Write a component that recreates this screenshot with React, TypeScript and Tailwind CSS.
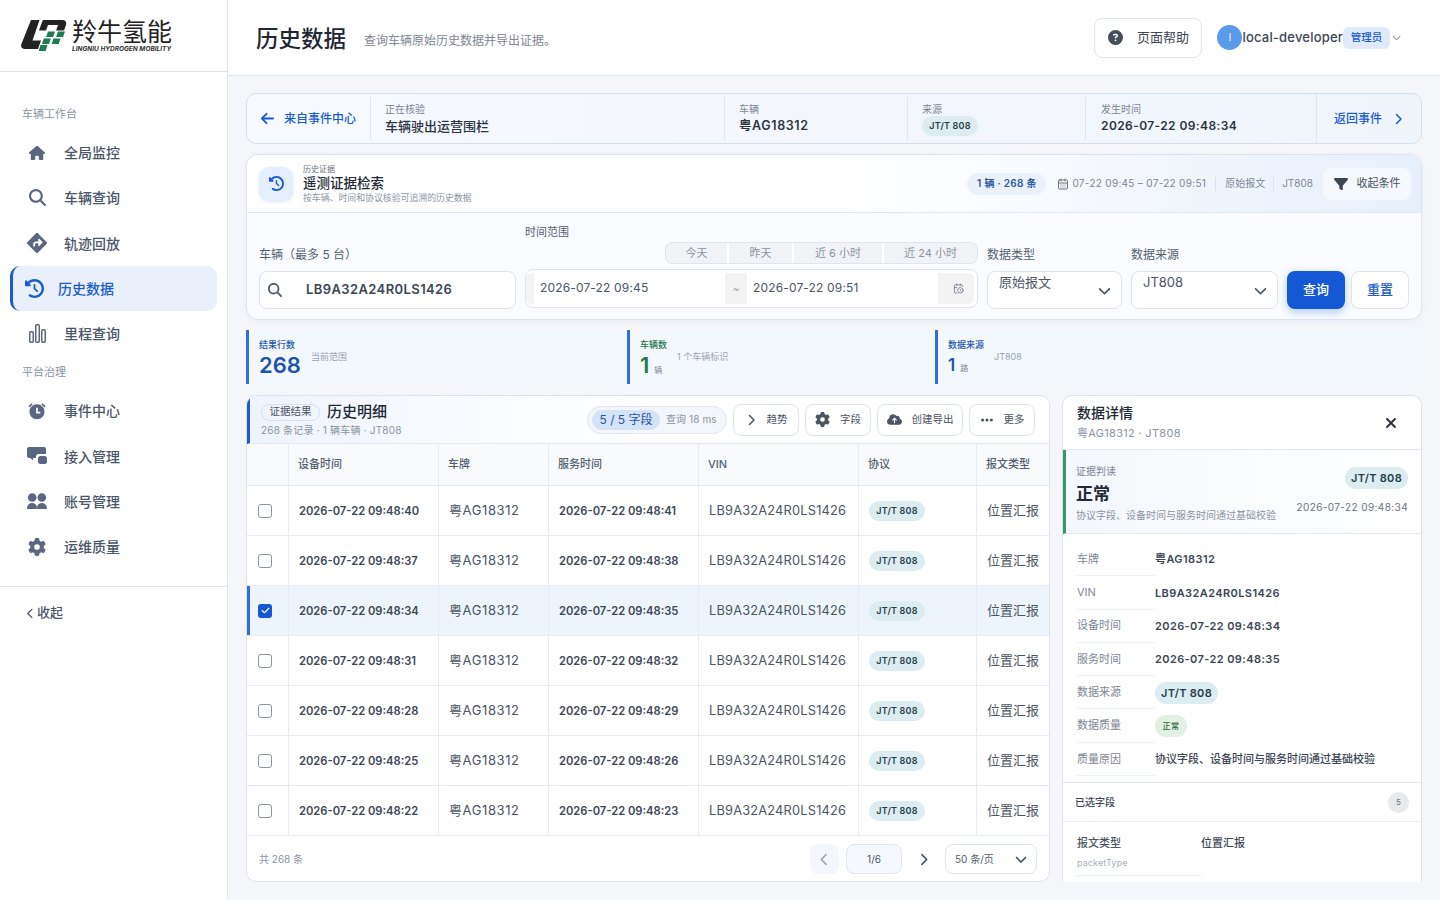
import { FaHouse, FaMagnifyingGlass, FaDiamondTurnRight, FaClockRotateLeft, FaGear, FaCircleQuestion, FaFilter, FaEllipsis, FaXmark, FaCheck, FaCloudArrowUp, FaArrowLeft, FaChevronRight, FaChevronLeft, FaChevronDown } from 'react-icons/fa6';
import { RiAlarmFill } from 'react-icons/ri';
import { LuCalendarDays, LuCalendarClock } from 'react-icons/lu';

const FONT = "font-['Inter','Noto_Sans_CJK_SC',sans-serif]";

function AccessIcon() {
	return (
		<svg width="20" height="19" viewBox="0 0 20 19" fill="currentColor">
			<path d="M2 0h15a2 2 0 0 1 2 2v5h-7a3 3 0 0 0-3 3v1H6v2.5L3.2 11H2a2 2 0 0 1-2-2V2a2 2 0 0 1 2-2z" />
			<rect x="11" y="9" width="9" height="8" rx="2.5" />
		</svg>
	);
}

function BarsIcon() {
	return (
		<svg width="17" height="19" viewBox="0 0 17 19" fill="none" stroke="currentColor" strokeWidth="1.5">
			<rect x="0.75" y="7.750" width="3.5" height="10.500" rx="1" />
			<rect x="6.750" y="0.750" width="3.5" height="17.500" rx="1" />
			<rect x="12.750" y="5.750" width="3.5" height="12.500" rx="1" />
		</svg>
	);
}

function PeopleIcon() {
	return (
		<svg width="20" height="16" viewBox="0 0 20 16" fill="currentColor">
			<circle cx="5.200" cy="4.500" r="4.300" />
			<circle cx="14.800" cy="4.500" r="4.300" />
			<path d="M0 16c0-3.500 2-6 5.200-6 2 0 3.500.9 4.300 2.500.3.800.4 2.200.4 3.500zM20 16c0-3.500-2-6-5.200-6-2 0-3.500.9-4.300 2.500-.3.800-.4 2.200-.4 3.500z" />
		</svg>
	);
}

function LogoMark() {
	return (
		<svg width="46" height="31" viewBox="0 0 46 31">
			<path d="M10 0h8.500L11.500 20.500H20L17 29H4C.8 29-.6 27 .4 24z" fill="#222" />
			<path d="M22 0h18.500c4 0 5.500 2 4.500 5l-2 5.500h-8l2.200-5.500H27l-2 5.500h-7l2.500-7C21 2 21.500 1 22 0z" fill="#222" />
			<path d="M27 11.500h7l-1.800 5.500h-7zM37 11.500h7L42 17h-7zM22.800 18.500h7L28 24h-7zM32.500 18.500h7L37.700 24h-7zM19.500 25h7l-1.800 6h-7z" fill="#1f7a4d" />
		</svg>
	);
}

const mainNav = [
	{ label: '全局监控', icon: <FaHouse size={16} /> },
	{ label: '车辆查询', icon: <FaMagnifyingGlass size={17} /> },
	{ label: '轨迹回放', icon: <FaDiamondTurnRight size={20} /> },
	{ label: '历史数据', icon: <FaClockRotateLeft size={19} />, active: true },
	{ label: '里程查询', icon: <BarsIcon /> },
];
const adminNav = [
	{ label: '事件中心', icon: <RiAlarmFill size={24} /> },
	{ label: '接入管理', icon: <AccessIcon /> },
	{ label: '账号管理', icon: <PeopleIcon /> },
	{ label: '运维质量', icon: <FaGear size={18} /> },
];

function NavItem({ label, icon, active }: { label: string; icon: React.ReactNode; active?: boolean }) {
	if (active) {
		return (
			<div className="mx-[10px] flex h-[45.250px] items-center rounded-[10px] border-l-[3px] border-[#1a5bd0] bg-[#e9f0fb] pl-[11px] text-[#1a5bd0]">
				<span className="flex w-[20px] justify-center">{icon}</span>
				<span className="ml-[14px] text-[14px] font-medium">{label}</span>
			</div>
		);
	}
	return (
		<div className="flex h-[45.250px] items-center pl-[27px] text-[#4b5668]">
			<span className="flex w-[20px] justify-center text-[#5b6780]">{icon}</span>
			<span className="ml-[17px] text-[14px] font-medium">{label}</span>
		</div>
	);
}

function Sidebar() {
	return (
		<aside className="flex w-[228px] shrink-0 flex-col border-r border-[#e2e6ec] bg-white">
			<div className="flex h-[72px] items-center gap-[5px] border-b border-[#e2e6ec] pl-[21px]">
				<LogoMark />
				<div className="flex flex-col">
					<span className="text-[25px] leading-[26px] font-normal whitespace-nowrap text-[#222]">羚牛氢能</span>
					<span className="text-[6.500px] leading-[8px] font-bold whitespace-nowrap text-[#333] italic">LINGNIU HYDROGEN MOBILITY</span>
				</div>
			</div>
			<div className="pt-[34px] pl-[22px] text-[11px] leading-[16px] text-[#8b94a3]">车辆工作台</div>
			<div className="mt-[8px] flex flex-col">
				{mainNav.map((n) => (
					<NavItem key={n.label} {...n} />
				))}
			</div>
			<div className="mt-[8px] pl-[22px] text-[11px] leading-[16px] text-[#8b94a3]">平台治理</div>
			<div className="mt-[8px] flex flex-col border-b border-[#e2e6ec] pb-[17px]">
				{adminNav.map((n) => (
					<NavItem key={n.label} {...n} />
				))}
			</div>
			<div className="mt-[16px] flex items-center gap-[1px] pl-[25px] text-[13px] font-medium text-[#4b5668]">
				<FaChevronLeft size={11} />
				收起
			</div>
		</aside>
	);
}

function TopBar() {
	return (
		<header className="flex h-[76px] shrink-0 items-center justify-between border-b border-[#e2e6ec] bg-white pr-[39px] pl-[28px]">
			<div className="mt-[2px] flex items-center gap-[18px]">
				<h1 className="text-[22.500px] font-medium text-[#1f2733]">历史数据</h1>
				<span className="mt-[5px] text-[12px] text-[#7d8694]">查询车辆原始历史数据并导出证据。</span>
			</div>
			<div className="flex items-center">
				<button type="button" className="flex h-[40px] w-[108px] items-center justify-center gap-[14px] rounded-[8px] border border-[#e2e6ec] bg-white text-[13px] text-[#3c4654]">
					<FaCircleQuestion size={15} className="text-[#454d59]" />
					页面帮助
				</button>
				<div className="ml-[15px] flex h-[25px] w-[25px] items-center justify-center rounded-full bg-[#5a9bea] text-[10px] text-white">l</div>
				<span className="text-[13px] font-medium tracking-[0.2px] text-[#3c4654]">local-developer</span>
				<span className="flex h-[22px] w-[47px] items-center justify-center rounded-[6px] bg-[#dfeafb] text-[10.500px] font-medium text-[#1a5bd0]">管理员</span>
				<FaChevronDown size={9} className="ml-[2px] text-[#9aa3af]" />
			</div>
		</header>
	);
}

function ProtoTag({ big }: { big?: boolean }) {
	return (
		<span className={`inline-flex items-center justify-center rounded-full bg-[#dcecf0] font-semibold whitespace-nowrap text-[#1f3f4a] ${big ? 'h-[22px] w-[63px] text-[11px] tracking-[0.3px]' : 'h-[20px] w-[56px] text-[9px] tracking-[0.2px]'}`}>
			JT/T 808
		</span>
	);
}

function ContextBar() {
	return (
		<section className="flex h-[51px] shrink-0 rounded-[10px] border border-[#d6dfec] bg-gradient-to-r from-[#f6f9fd] to-[#f0f5fc]">
			<div className="flex w-[123px] shrink-0 items-center gap-[9px] pl-[13px] text-[#1a5bd0]">
				<FaArrowLeft size={15} />
				<span className="text-[12px] font-medium whitespace-nowrap">来自事件中心</span>
			</div>
			<div className="my-[3px] flex w-[354px] shrink-0 flex-col justify-center border-l border-[#e0e6ef] pl-[14px]">
				<span className="text-[10px] leading-[15px] text-[#7d8694]">正在核验</span>
				<span className="text-[13px] leading-[19px] font-medium text-[#2b3440]">车辆驶出运营围栏</span>
			</div>
			<div className="my-[3px] flex w-[183px] shrink-0 flex-col justify-center border-l border-[#e0e6ef] pl-[14px]">
				<span className="text-[10px] leading-[15px] text-[#7d8694]">车辆</span>
				<span className="text-[12.500px] leading-[18px] font-semibold tracking-[0.6px] text-[#2b3440]">粤AG18312</span>
			</div>
			<div className="my-[3px] flex w-[178px] shrink-0 flex-col justify-center border-l border-[#e0e6ef] pl-[14px]">
				<span className="text-[10px] leading-[14px] text-[#7d8694]">来源</span>
				<span className="flex"><ProtoTag /></span>
			</div>
			<div className="my-[3px] flex w-[231px] shrink-0 flex-col justify-center border-l border-[#e0e6ef] pl-[15px]">
				<span className="text-[10px] leading-[15px] text-[#7d8694]">发生时间</span>
				<span className="text-[12px] leading-[18px] font-semibold tracking-[0.4px] text-[#2b3440]">2026-07-22 09:48:34</span>
			</div>
			<div className="flex flex-1 items-center gap-[10px] border-l border-[#e0e6ef] pl-[17px] text-[#1a5bd0]">
				<span className="text-[12px] font-medium whitespace-nowrap">返回事件</span>
				<FaChevronRight size={12} />
			</div>
		</section>
	);
}

function FieldLabel({ children }: { children: React.ReactNode }) {
	return <div className="text-[12px] leading-[18px] text-[#55606e]">{children}</div>;
}

function SelectBox({ value, w }: { value: string; w: string }) {
	return (
		<div className={`flex h-[38px] items-start justify-between rounded-[8px] border border-[#dfe4eb] bg-white pr-[10px] pl-[11px] ${w}`}>
			<span className="text-[13px] leading-[20px] text-[#4b5563]">{value}</span>
			<FaChevronDown size={13} className="mt-[12px] text-[#4b5563]" />
		</div>
	);
}

function SearchCard() {
	return (
		<section className="mt-[10px] h-[166px] shrink-0 rounded-[12px] border border-[#dde3ec] bg-[#f9fbfe] shadow-[0_2px_6px_rgba(30,60,110,0.04)]">
			<div className="flex h-[58px] items-center justify-between rounded-t-[12px] border-b border-[#e3e8f0] bg-gradient-to-r from-white via-white to-[#e7effb] pr-[10px] pl-[12px]">
				<div className="flex items-center gap-[10px]">
					<div className="flex h-[34px] w-[34px] items-center justify-center rounded-[10px] bg-[#e5effc] text-[#1a5bd0] shadow-[0_1px_3px_rgba(30,60,110,0.15)]">
						<FaClockRotateLeft size={15} />
					</div>
					<div className="flex flex-col">
						<span className="text-[8px] leading-[11px] text-[#6b7480]">历史证据</span>
						<span className="text-[13.500px] leading-[17px] font-medium text-[#222a35]">遥测证据检索</span>
						<span className="text-[8.900px] leading-[12px] text-[#8b94a3]">按车辆、时间和协议核验可追溯的历史数据</span>
					</div>
				</div>
				<div className="flex items-center">
					<span className="flex h-[22px] w-[79px] items-center justify-center rounded-full bg-[#eaf1fb] text-[10px] font-semibold tracking-[0.3px] whitespace-nowrap text-[#2d5a9e]">1 辆 · 268 条</span>
					<LuCalendarDays size={12} className="ml-[11px] text-[#6b7480]" />
					<span className="ml-[3px] text-[10px] tracking-[0.3px] whitespace-nowrap text-[#7d8694]">07-22 09:45 – 07-22 09:51</span>
					<span className="mx-[9px] h-[14px] border-l border-[#dbe1ea]" />
					<span className="text-[10px] whitespace-nowrap text-[#7d8694]">原始报文</span>
					<span className="mx-[8px] h-[14px] border-l border-[#dbe1ea]" />
					<span className="text-[10px] whitespace-nowrap text-[#7d8694]">JT808</span>
					<div className="ml-[10px] flex h-[32px] w-[88px] items-center justify-center gap-[9px] rounded-[8px] bg-[#f5f8fd] text-[11px] whitespace-nowrap text-[#4b5563]">
						<FaFilter size={14} className="shrink-0 text-[#3c4654]" />
						收起条件
					</div>
				</div>
			</div>
			<div className="flex items-end gap-[9px] px-[12px] pt-[11px]">
				<div className="w-[257px]">
					<FieldLabel>车辆（最多 5 台）</FieldLabel>
					<div className="mt-[7px] flex h-[38px] items-center rounded-[8px] border border-[#dfe4eb] bg-white pl-[8px]">
						<FaMagnifyingGlass size={14} className="text-[#4b5563]" />
						<span className="ml-[24px] text-[13px] font-semibold tracking-[0.4px] text-[#3c4654]">LB9A32A24R0LS1426</span>
					</div>
				</div>
				<div className="w-[453px] pb-[1px]">
					<div className="text-[11px] leading-[16px] text-[#55606e]">时间范围</div>
					<div className="mt-[2px] ml-[140px] flex h-[22px] overflow-hidden rounded-[7px] border border-[#e2e6ec] bg-[#f1f3f6] text-[11px] text-[#8b94a3]">
						<span className="flex w-[63px] items-center justify-center border-r-[2px] border-white">今天</span>
						<span className="flex w-[65px] items-center justify-center border-r-[2px] border-white">昨天</span>
						<span className="flex w-[90px] items-center justify-center border-r-[2px] border-white">近 6 小时</span>
						<span className="flex flex-1 items-center justify-center">近 24 小时</span>
					</div>
					<div className="mt-[5px] flex h-[39px] items-stretch rounded-[8px] border border-[#dfe4eb] bg-white py-[3px]">
						<span className="w-[8px] rounded-l-[6px] bg-[#f3f3f3]" />
						<span className="w-[191px] pl-[6px] text-[12px] leading-[30px] tracking-[0.15px] text-[#4b5563]">2026-07-22 09:45</span>
						<span className="flex w-[22px] items-center justify-center bg-[#f3f3f3] text-[10px] text-[#9aa3af]">~</span>
						<span className="w-[191px] pl-[6px] text-[12px] leading-[30px] tracking-[0.15px] text-[#4b5563]">2026-07-22 09:51</span>
						<span className="flex w-[36px] items-center justify-center rounded-r-[6px] bg-[#f3f3f3] pl-[5px] text-[#7d8694]"><LuCalendarClock size={11} /></span>
					</div>
				</div>
				<div>
					<FieldLabel>数据类型</FieldLabel>
					<div className="mt-[7px]"><SelectBox value="原始报文" w="w-[135px]" /></div>
				</div>
				<div>
					<FieldLabel>数据来源</FieldLabel>
					<div className="mt-[7px]"><SelectBox value="JT808" w="w-[147px]" /></div>
				</div>
				<button type="button" className="h-[38px] w-[58px] rounded-[8px] bg-[#1558d6] text-[13px] font-medium text-white shadow-[0_3px_8px_rgba(21,88,214,0.3)]">查询</button>
				<button type="button" className="-ml-[3px] h-[38px] w-[58px] rounded-[8px] border border-[#dfe4eb] bg-white text-[13px] font-medium text-[#1a5bd0]">重置</button>
			</div>
		</section>
	);
}

function Stat({ w, label, value, unit, note, green, small }: { w: string; label: string; value: string; unit?: string; note: string; green?: boolean; small?: boolean }) {
	return (
		<div className={`flex h-[54px] border-l-[3px] border-[#2f6fdd] bg-[#f3f8fd] pt-[9px] pl-[10px] ${w}`}>
			<div className="flex flex-col">
				<span className={`text-[9px] leading-[12px] font-medium ${green ? 'text-[#1f7a4d]' : 'text-[#1f55a8]'}`}>{label}</span>
				<span className={`mt-[2px] flex items-baseline font-semibold ${green ? 'text-[#1f7a4d]' : 'text-[#1f55a8]'} ${small ? 'text-[17px] leading-[24px]' : 'text-[22px] leading-[24px]'}`}>
					{value}
					{unit && <span className="ml-[5px] text-[8px] font-normal text-[#7d8694]">{unit}</span>}
				</span>
			</div>
			<span className="mt-[12px] ml-[10px] text-[9px] leading-[12px] text-[#9aa3af]">{note}</span>
		</div>
	);
}

const rows = [
	['2026-07-22 09:48:40', '2026-07-22 09:48:41'],
	['2026-07-22 09:48:37', '2026-07-22 09:48:38'],
	['2026-07-22 09:48:34', '2026-07-22 09:48:35'],
	['2026-07-22 09:48:31', '2026-07-22 09:48:32'],
	['2026-07-22 09:48:28', '2026-07-22 09:48:29'],
	['2026-07-22 09:48:25', '2026-07-22 09:48:26'],
	['2026-07-22 09:48:22', '2026-07-22 09:48:23'],
];

const cols = ['w-[42px]', 'w-[150px]', 'w-[110px]', 'w-[150px]', 'w-[160px]', 'w-[118px]', 'w-[72px]'];

function ToolButton({ w, icon, label }: { w: string; icon: React.ReactNode; label: string }) {
	return (
		<button type="button" className={`flex h-[32px] items-center justify-center gap-[10px] rounded-[8px] border border-[#dfe4eb] bg-white text-[10.500px] whitespace-nowrap text-[#4b5563] ${w}`}>
			{icon}
			{label}
		</button>
	);
}

function TableCard() {
	return (
		<section className="flex w-[804px] shrink-0 flex-col overflow-hidden rounded-[10px] border border-[#dde3ec] bg-white">
			<div className="flex h-[48px] shrink-0 items-center justify-between border-b border-[#e3e8f0] border-l-[3px] border-l-[#1a5bd0] bg-gradient-to-r from-[#eff4fc] via-white to-white pr-[14px] pl-[11px]">
				<div className="flex flex-col">
					<div className="flex items-center gap-[7px]">
						<span className="flex h-[17px] w-[59px] items-center justify-center rounded-full border border-[#d6dfec] text-[10.500px] text-[#4b5563]">证据结果</span>
						<span className="text-[15px] leading-[20px] font-medium text-[#222a35]">历史明细</span>
					</div>
					<span className="mt-[2px] text-[10px] leading-[13px] tracking-[0.2px] text-[#8b94a3]">268 条记录 · 1 辆车辆 · JT808</span>
				</div>
				<div className="flex items-center gap-[6px]">
					<div className="flex h-[28px] w-[140px] items-center gap-[6px] rounded-full border border-[#e0e6ef] bg-[#f3f6fb] pl-[4px] whitespace-nowrap">
						<span className="flex h-[20px] w-[68px] items-center justify-center rounded-full bg-[#d5e3f8] text-[12px] text-[#1f55a8]">5 / 5 字段</span>
						<span className="text-[10px] tracking-[0.1px] text-[#8b94a3]">查询 18 ms</span>
					</div>
					<ToolButton w="w-[66px]" icon={<FaChevronRight size={12} className="text-[#4b5563]" />} label="趋势" />
					<ToolButton w="w-[66px]" icon={<FaGear size={15} className="text-[#4b5563]" />} label="字段" />
					<ToolButton w="w-[86px]" icon={<FaCloudArrowUp size={15} className="text-[#4b5563]" />} label="创建导出" />
					<ToolButton w="w-[66px]" icon={<FaEllipsis size={14} className="text-[#4b5563]" />} label="更多" />
				</div>
			</div>
			<div className="flex h-[42px] shrink-0 border-b border-[#e3e8f0] bg-[#f8fafc] text-[11px] font-medium text-[#55606e]">
				{['', '设备时间', '车牌', '服务时间', 'VIN', '协议', '报文类型'].map((h, i) => (
					<div key={h} className={`flex shrink-0 items-center border-r border-[#e8ecf2] pl-[9px] whitespace-nowrap last:border-r-0 ${cols[i]}`}>{h}</div>
				))}
			</div>
			{rows.map((r, idx) => {
				const sel = idx === 2;
				return (
					<div key={r[0]} className={`relative flex h-[50px] shrink-0 items-center border-b border-[#e8ecf2] ${sel ? 'bg-[#edf4fc]' : 'bg-white'}`}>
						{sel && <span className="absolute top-0 bottom-0 left-0 w-[3px] bg-[#2f6fdd]" />}
						<div className={`flex h-full shrink-0 items-center border-r border-[#e8ecf2] pl-[11px] ${cols[0]}`}>
							{sel ? (
								<span className="flex h-[14px] w-[14px] items-center justify-center rounded-[3px] bg-[#1558d6] text-white"><FaCheck size={9} /></span>
							) : (
								<span className="h-[14px] w-[14px] rounded-[3px] border border-[#8b94a3] bg-white" />
							)}
						</div>
						<div className={`flex h-full shrink-0 items-center border-r border-[#e8ecf2] pt-[1px] pl-[10px] text-[11.200px] font-semibold whitespace-nowrap text-[#3c4654] ${cols[1]}`}>{r[0]}</div>
						<div className={`flex h-full shrink-0 items-center border-r border-[#e8ecf2] pt-[1px] pl-[10px] text-[13px] tracking-[0.6px] whitespace-nowrap text-[#4b5563] ${cols[2]}`}>粤AG18312</div>
						<div className={`flex h-full shrink-0 items-center border-r border-[#e8ecf2] pt-[1px] pl-[10px] text-[11.200px] font-semibold whitespace-nowrap text-[#3c4654] ${cols[3]}`}>{r[1]}</div>
						<div className={`flex h-full shrink-0 items-center border-r border-[#e8ecf2] pt-[1px] pl-[10px] text-[12.800px] tracking-[0.2px] whitespace-nowrap text-[#4b5563] ${cols[4]}`}>LB9A32A24R0LS1426</div>
						<div className={`flex h-full shrink-0 items-center border-r border-[#e8ecf2] pl-[10px] ${cols[5]}`}><ProtoTag /></div>
						<div className={`flex h-full shrink-0 items-center pl-[10px] text-[13px] whitespace-nowrap text-[#4b5563] ${cols[6]}`}>位置汇报</div>
					</div>
				);
			})}
			<div className="flex flex-1 items-center justify-between pt-[1px] pr-[12px] pl-[12px]">
				<span className="text-[10px] text-[#8b94a3]">共 268 条</span>
				<div className="flex items-center">
					<span className="flex h-[30px] w-[29px] items-center justify-center rounded-[8px] bg-[#f3f6fa] text-[#9aa3af]"><FaChevronLeft size={13} /></span>
					<span className="ml-[7px] flex h-[30px] w-[56px] items-center justify-center rounded-[8px] border border-[#dfe6f0] bg-[#f5f9fd] text-[10px] text-[#4b5563]">1/6</span>
					<span className="mx-[15px] text-[#4b5563]"><FaChevronRight size={13} /></span>
					<span className="flex h-[30px] w-[92px] items-center justify-between rounded-[8px] border border-[#dfe4eb] bg-white pr-[9px] pl-[9px] text-[10px] whitespace-nowrap text-[#55606e]">
						50 条/页
						<FaChevronDown size={12} className="text-[#3c4654]" />
					</span>
				</div>
			</div>
		</section>
	);
}

function DetailRow({ label, children }: { label: string; children: React.ReactNode }) {
	return (
		<div className="flex h-[33.300px] items-center">
			<div className="flex h-full w-[78px] shrink-0 items-center border-b border-[#edf0f4] text-[11px] text-[#7d8694]">{label}</div>
			<div className="text-[11px] font-semibold tracking-[0.4px] whitespace-nowrap text-[#3c4654]">{children}</div>
		</div>
	);
}

function DetailCard() {
	return (
		<section className="flex min-w-0 flex-1 flex-col overflow-hidden rounded-t-[10px] border-x border-t border-[#dde3ec] bg-white">
			<div className="flex h-[54px] shrink-0 items-center justify-between border-b border-[#e3e8f0] pr-[22px] pl-[14px]">
				<div className="flex flex-col self-start pt-[7px]">
					<span className="text-[14px] leading-[20px] font-medium text-[#222a35]">数据详情</span>
					<span className="mt-[2px] text-[11px] leading-[16px] tracking-[0.3px] text-[#8b94a3]">粤AG18312 · JT808</span>
				</div>
				<FaXmark size={16} className="text-[#2b3440]" />
			</div>
			<div className="flex h-[84px] shrink-0 justify-between border-b border-[#e3e8f0] border-l-[3px] border-l-[#2f9a6a] bg-gradient-to-r from-[#f4f7fb] to-white pr-[13px] pl-[10px]">
				<div className="flex flex-col pt-[14px]">
					<span className="text-[10px] leading-[14px] text-[#7d8694]">证据判读</span>
					<span className="mt-[4px] text-[17px] leading-[24px] font-semibold text-[#222a35]">正常</span>
					<span className="mt-[2px] text-[10px] leading-[14px] whitespace-nowrap text-[#8b94a3]">协议字段、设备时间与服务时间通过基础校验</span>
				</div>
				<div className="flex flex-col items-end pt-[17px]">
					<ProtoTag big />
					<span className="mt-[11px] text-[10px] tracking-[0.4px] whitespace-nowrap text-[#6b7480]">2026-07-22 09:48:34</span>
				</div>
			</div>
			<div className="shrink-0 border-b border-[#e3e8f0] pt-[9px] pb-[6px] pl-[14px]">
				<DetailRow label="车牌">粤AG18312</DetailRow>
				<DetailRow label="VIN">LB9A32A24R0LS1426</DetailRow>
				<DetailRow label="设备时间">2026-07-22 09:48:34</DetailRow>
				<DetailRow label="服务时间">2026-07-22 09:48:35</DetailRow>
				<DetailRow label="数据来源"><ProtoTag big /></DetailRow>
				<DetailRow label="数据质量">
					<span className="flex h-[22px] w-[32px] items-center justify-center rounded-full bg-[#e1f0e2] text-[8px] font-medium text-[#2a6b3f]">正常</span>
				</DetailRow>
				<DetailRow label="质量原因"><span className="font-medium tracking-normal">协议字段、设备时间与服务时间通过基础校验</span></DetailRow>
			</div>
			<div className="flex h-[39px] shrink-0 items-center justify-between border-b border-[#e8ecf2] pr-[12px] pl-[12px]">
				<span className="text-[10px] font-medium text-[#3c4654]">已选字段</span>
				<span className="flex h-[21px] w-[21px] items-center justify-center rounded-full bg-[#e8e9eb] text-[8px] text-[#6b7480]">5</span>
			</div>
			<div className="flex pl-[14px]">
				<div className="w-[124px] shrink-0 border-b border-[#e8ecf2] pt-[13px] pb-[6px]">
					<div className="text-[11px] leading-[16px] font-medium text-[#4b5563]">报文类型</div>
					<div className="mt-[6px] text-[9px] leading-[12px] tracking-[0.1px] text-[#a8b0bb]">packetType</div>
				</div>
				<div className="pt-[13px] text-[11px] leading-[16px] font-medium text-[#3c4654]">位置汇报</div>
			</div>
		</section>
	);
}

export default function App() {
	return (
		<div className={`flex h-[900px] w-[1440px] overflow-hidden bg-[#f4f6fa] ${FONT}`}>
			<Sidebar />
			<div className="flex min-w-0 flex-1 flex-col">
				<TopBar />
				<main className="flex min-h-0 flex-1 flex-col px-[18px] pt-[17px] pb-[18px]">
					<ContextBar />
					<SearchCard />
					<div className="mt-[10px] flex shrink-0">
						<Stat w="w-[381px]" label="结果行数" value="268" note="当前范围" />
						<Stat w="w-[308px]" label="车辆数" value="1" unit="辆" note="1 个车辆标识" green />
						<Stat w="flex-1" label="数据来源" value="1" unit="路" note="JT808" small />
					</div>
					<div className="mt-[11px] flex min-h-0 flex-1 gap-[12px]">
						<TableCard />
						<DetailCard />
					</div>
				</main>
			</div>
		</div>
	);
}
